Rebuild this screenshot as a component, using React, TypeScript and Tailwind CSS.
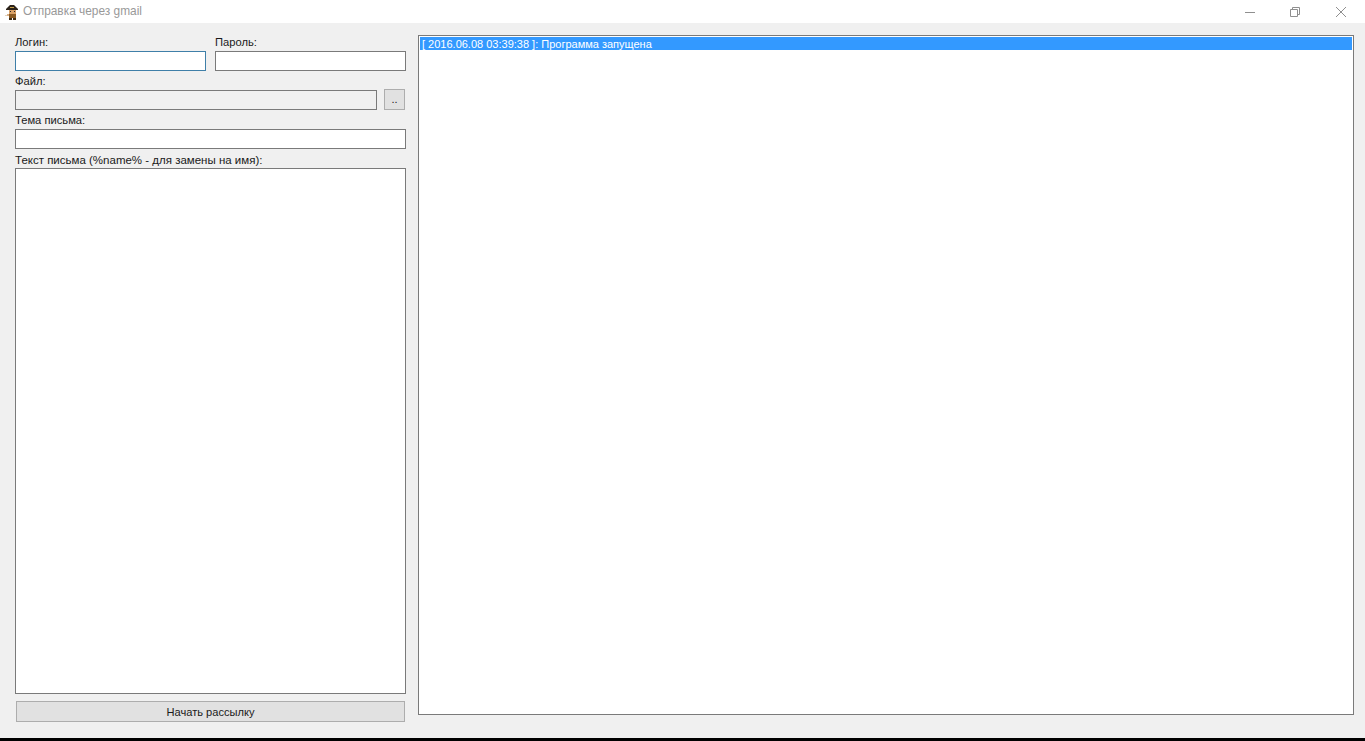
export default function App() {
  const font = "font-['Liberation_Sans',Arial,sans-serif]";
  const inputClass = "block w-full h-[20px] border border-[#7a7a7a] bg-white outline-none";

  return (
    <div className={`${font} flex h-[741px] w-[1365px] flex-col overflow-hidden bg-[#f0f0f0] text-[11.2px] leading-[15px] text-[#1a1a1a]`}>
      {/* window title */}
      <div className="flex h-[23px] shrink-0 items-center bg-white">
        <svg className="ml-[4px] h-[16px] w-[16px]" viewBox="0 0 16 16">
          <path d="M3 4 L6 1 H10 L13 4 L14 5 V6 H2 V5 Z" fill="#2b2219" />
          <rect x="6" y="3" width="4" height="1" fill="#c9a24a" />
          <rect x="5" y="6" width="7" height="4" fill="#d9a066" />
          <rect x="6" y="7" width="1" height="1" fill="#222" />
          <rect x="10" y="7" width="1" height="1" fill="#222" />
          <rect x="5" y="10" width="7" height="4" fill="#8a5a24" />
          <rect x="3" y="10" width="2" height="2" fill="#d9b38c" />
          <rect x="1" y="11" width="2" height="1" fill="#e3d3bd" />
          <rect x="5" y="14" width="3" height="2" fill="#3d2a14" />
          <rect x="9" y="14" width="3" height="2" fill="#3d2a14" />
        </svg>
        <span className="ml-[3px] text-[11.9px] text-[#999999]">Отправка через gmail</span>
        <div className="ml-auto flex items-center">
          <svg className="h-[12px] w-[12px]" viewBox="0 0 12 12">
            <path d="M1 6.5 H11" stroke="#8f8f8f" fill="none" />
          </svg>
          <svg className="ml-[33px] h-[12px] w-[12px]" viewBox="0 0 12 12">
            <path d="M1.5 3.5 H8.5 V10.5 H1.5 Z M3.5 3.5 V1.5 H10.5 V8.5 H8.5" stroke="#8f8f8f" fill="none" />
          </svg>
          <svg className="ml-[34px] mr-[18px] h-[12px] w-[12px]" viewBox="0 0 12 12">
            <path d="M1 1 L11 11 M11 1 L1 11" stroke="#8f8f8f" fill="none" />
          </svg>
        </div>
      </div>

      {/* form and log */}
      <div className="flex min-h-0 flex-1 pl-[15px]">
        <div className="flex w-[391px] shrink-0 flex-col pt-[12px]">
          <div className="flex gap-[9px]">
            <div className="w-[191px]">
              <div className="h-[16px]">Логин:</div>
              <input className="block h-[20px] w-full border border-[#3f7fa8] bg-white outline-none" />
            </div>
            <div className="w-[191px]">
              <div className="h-[16px]">Пароль:</div>
              <input className={inputClass} />
            </div>
          </div>

          <div className="mt-[3px] h-[15px]">Файл:</div>
          <div className="flex items-center">
            <input disabled className="mb-[-1px] block h-[20px] w-[362px] border border-[#7a7a7a] bg-[#f0f0f0]" />
            <button className="ml-[7px] h-[21px] w-[21px] border border-[#adadad] bg-[#e1e1e1] text-[11px] leading-[15px]">..</button>
          </div>

          <div className="mt-[3px] h-[16px]">Тема письма:</div>
          <input className={inputClass} />

          <div className="mt-[4px] h-[15px] text-[11.5px]">Текст письма (%name% - для замены на имя):</div>
          <textarea className="block h-[526px] w-full resize-none border border-[#7a7a7a] bg-white outline-none" />

          <button className="ml-[1px] mt-[7px] h-[21px] w-[389px] border border-[#adadad] bg-[#e1e1e1] pt-[1px] text-[11.1px] leading-[15px]">
            Начать рассылку
          </button>
        </div>

        <div className="ml-[12px] mt-[12px] h-[680px] w-[936px] border border-[#7a7a7a] bg-white pl-[1px] pr-[1px] pt-[1px]">
          <div className="h-[13px] whitespace-pre bg-[#3399ff] pl-[2px] text-[11px] leading-[14px] text-white">
            [ 2016.06.08 03:39:38 ]: Программа запущена
          </div>
        </div>
      </div>

      <div className="h-[3px] shrink-0 bg-black" />
    </div>
  );
}
